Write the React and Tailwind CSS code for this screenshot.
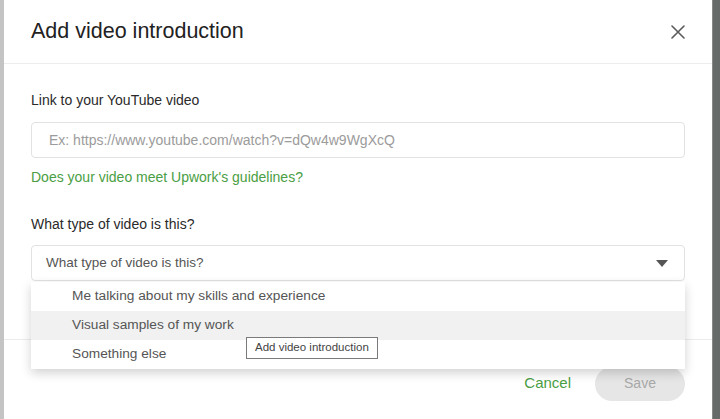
import React, { useState } from "react";

const options = [
  "Me talking about my skills and experience",
  "Visual samples of my work",
  "Something else",
];

const CloseIcon = () => (
  <svg width="14" height="14" viewBox="0 0 14 14" fill="none">
    <path d="M1 1L13 13M13 1L1 13" stroke="#5a5a5a" strokeWidth="1.6" strokeLinecap="round" />
  </svg>
);

const App = () => {
  const [url, setUrl] = useState("");
  const [hovered] = useState(1);

  return (
    <div
      className="w-[720px] h-[419px] flex overflow-hidden bg-[#c9c9c9]"
      style={{ fontFamily: '"Liberation Sans", Arial, sans-serif' }}
    >
      <div className="w-[4px] bg-[#c4c4c4]" />

      <div className="flex-1 bg-white flex flex-col">
        <div className="h-[64px] shrink-0 flex items-center justify-between px-[27px] border-b border-[#ececec]">
          <h2 className="text-[21.5px] text-[#222]">Add video introduction</h2>
          <button className="p-0">
            <CloseIcon />
          </button>
        </div>

        <div className="px-[27px] pt-[26px]">
          <label className="block text-[14px] leading-[20px] text-[#2a2a2a]">
            Link to your YouTube video
          </label>
          <input
            value={url}
            onChange={(e) => setUrl(e.target.value)}
            placeholder="Ex: https://www.youtube.com/watch?v=dQw4w9WgXcQ"
            className="mt-3 w-full h-[36px] px-[17px] border border-[#e2e2e2] rounded-[4px] text-[14px] text-[#333] placeholder:text-[#9b9b9b] outline-none"
          />
          <a className="block mt-[10px] text-[14px] leading-[18px] text-[#4a9e44]">
            Does your video meet Upwork's guidelines?
          </a>

          <label className="block mt-[28px] text-[14px] leading-[20px] text-[#2a2a2a]">
            What type of video is this?
          </label>
          <div className="relative mt-[11px]">
            <div className="h-[36px] flex items-center justify-between pl-[14px] pr-[16px] border border-[#e2e2e2] rounded-[4px]">
              <span className="text-[13.5px] text-[#555]">What type of video is this?</span>
              <svg width="12" height="7" viewBox="0 0 12 7">
                <path d="M0 0H12L6 7Z" fill="#555" />
              </svg>
            </div>

            <ul className="absolute left-0 right-0 top-[37px] z-10 bg-white shadow-[0_4px_10px_rgba(0,0,0,0.18)]">
              {options.map((opt, i) => (
                <li
                  key={opt}
                  className={`h-[29px] flex items-center pl-[41px] text-[13.7px] text-[#555] ${
                    i === hovered ? "bg-[#f1f1f1]" : ""
                  }`}
                >
                  {opt}
                </li>
              ))}
            </ul>

            <div className="absolute left-[215px] top-[92px] z-20 border border-[#7a7a7a] bg-white px-[8px] h-[22px] flex items-center text-[11.5px] text-[#444]">
              Add video introduction
            </div>
          </div>
        </div>

        <div className="mt-[58px] border-t border-[#ececec] flex items-center justify-end gap-[24px] px-[27px] pt-[27px]">
          <button className="text-[15px] leading-[18px] text-[#4a9e44] -mt-[2px]">Cancel</button>
          <button className="w-[90px] h-[34px] rounded-full bg-[#e6e6e6] text-[14px] leading-[18px] pb-[2px] text-[#a8a8a8]">
            Save
          </button>
        </div>
      </div>

      <div className="w-[8px] bg-[#666a68] border-l border-[#888]" />
    </div>
  );
};

export default App;
